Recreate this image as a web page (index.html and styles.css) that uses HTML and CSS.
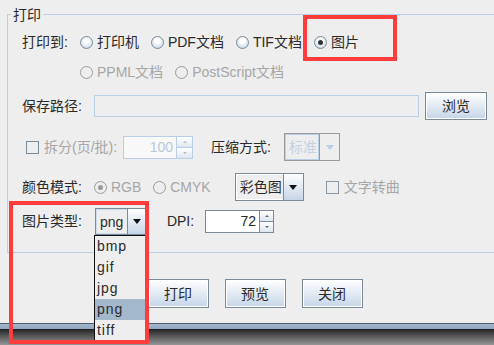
FILE: index.html
```
<!DOCTYPE html>
<html lang="zh-CN">
<head>
    <meta charset="UTF-8">
    <title>打印</title>
    <link rel="stylesheet" href="styles.css">
</head>
<body>
    <div class="group">
        <span class="group-title">打印</span>

        <div class="row row-target">
            <span class="label">打印到:</span>
            <span class="opt"><span class="radio"></span>打印机</span>
            <span class="opt"><span class="radio"></span>PDF文档</span>
            <span class="opt"><span class="radio"></span>TIF文档</span>
            <span class="opt"><span class="radio on"></span>图片</span>
        </div>

        <div class="row row-more">
            <span class="opt off"><span class="radio"></span>PPML文档</span>
            <span class="opt off"><span class="radio"></span>PostScript文档</span>
        </div>

        <div class="row">
            <span class="label">保存路径:</span>
            <span class="path-field"></span>
            <button class="button browse">浏览</button>
        </div>

        <div class="row row-split">
            <span class="opt off split-check"><span class="check"></span>拆分(页/批):</span>
            <span class="spinner split off">
                <span class="spin-field">100</span>
                <span class="spin-btns"><span class="up"></span><span class="down"></span></span>
            </span>
            <span class="label compress">压缩方式:</span>
            <span class="combo std off">
                <span class="combo-field">标准</span>
                <span class="combo-arrow"><span class="tri"></span></span>
            </span>
        </div>

        <div class="row row-color">
            <span class="label">颜色模式:</span>
            <span class="opt off"><span class="radio on"></span>RGB</span>
            <span class="opt off"><span class="radio"></span>CMYK</span>
            <span class="combo color">
                <span class="combo-field">彩色图</span>
                <span class="combo-arrow"><span class="tri"></span></span>
            </span>
            <span class="opt off curve"><span class="check"></span>文字转曲</span>
        </div>

        <div class="row">
            <span class="label">图片类型:</span>
            <span class="combo type">
                <span class="combo-field">png</span>
                <span class="combo-arrow"><span class="tri"></span></span>
                <ul class="popup">
                    <li>bmp</li>
                    <li>gif</li>
                    <li>jpg</li>
                    <li class="sel">png</li>
                    <li>tiff</li>
                </ul>
            </span>
            <span class="label dpi">DPI:</span>
            <span class="spinner dpi-spin">
                <span class="spin-field">72</span>
                <span class="spin-btns"><span class="up"></span><span class="down"></span></span>
            </span>
        </div>
    </div>

    <div class="actions">
        <button class="button">打印</button>
        <button class="button">预览</button>
        <button class="button">关闭</button>
    </div>

    <div class="frame-edge"></div>

    <div class="mark mark-image"></div>
    <div class="mark mark-type"></div>
</body>
</html>
```

FILE: styles.css
```
body {
    margin: 0;
    width: 494px;
    height: 345px;
    overflow: hidden;
    position: relative;
    background: #eeeeee;
    font-family: "Liberation Sans", "Noto Sans CJK SC", sans-serif;
    font-size: 14px;
    line-height: 16px;
    color: #2a2a2a;
}
.group {
    position: relative;
    margin: 14px 0 0 7px;
    width: 500px;
    height: 237px;
    border: 1px solid #b8cfe5;
    border-right: none;
}
.group-title {
    position: absolute;
    top: -8px;
    left: 3px;
    padding: 0 2px;
    background: #eeeeee;
}
.row {
    display: flex;
    align-items: center;
    height: 28px;
    padding-left: 14px;
    margin-top: 6px;
}
.row-target { margin-top: 13px; }
.row-more { margin-top: 2px; padding-left: 72px; }
.row-split { margin-top: 13px; padding-left: 18px; }
.row-color { margin-top: 12px; }
.label { margin-right: 12px; white-space: nowrap; }
.opt {
    display: flex;
    align-items: center;
    margin-right: 12px;
    white-space: nowrap;
}
.opt.off { color: #a6a6a6; }
.split-check { margin-right: 0; }
.radio {
    position: relative;
    width: 11px;
    height: 11px;
    margin-right: 4px;
    border: 1px solid #7a8a99;
    border-radius: 50%;
    background: radial-gradient(circle at 50% 35%, #ffffff 25%, #b9cbe0 100%);
}
.radio.on::after {
    content: "";
    position: absolute;
    left: 3px;
    top: 3px;
    width: 5px;
    height: 5px;
    border-radius: 50%;
    background: #333;
}
.off .radio {
    border-color: #9a9a9a;
    background: #eeeeee;
}
.off .radio.on::after { background: #9a9a9a; }
.check {
    width: 11px;
    height: 11px;
    margin-right: 5px;
    border: 1px solid #7a8a99;
}
.path-field {
    width: 323px;
    height: 20px;
    border: 1px solid #b8cfe5;
    background: #eeeeee;
    margin-right: 6px;
}
.button {
    width: 61px;
    height: 29px;
    padding: 0;
    border: 1px solid #7a8a99;
    box-shadow: inset 0 0 0 1px #ffffff;
    background: linear-gradient(#ffffff, #c5d5e8);
    font: inherit;
    color: #2a2a2a;
}
.browse { width: 62px; height: 28px; }
.spinner {
    display: flex;
    height: 23px;
    box-sizing: border-box;
}
.spin-field {
    box-sizing: border-box;
    height: 23px;
    padding-right: 3px;
    text-align: right;
    line-height: 21px;
    border: 1px solid #7a8a99;
    background: #ffffff;
}
.spin-btns {
    display: flex;
    flex-direction: column;
    box-sizing: border-box;
    height: 23px;
    border: 1px solid #7a8a99;
    border-left: none;
}
.spin-btns span {
    flex: 1;
    display: flex;
    align-items: center;
    justify-content: center;
    background: linear-gradient(#ffffff, #dde6f0);
}
.spin-btns .down { border-top: 1px solid #7a8a99; }
.spin-btns span::after {
    content: "";
    border-left: 2px solid transparent;
    border-right: 2px solid transparent;
}
.spin-btns .up::after { border-bottom: 2px solid #666; }
.spin-btns .down::after { border-top: 2px solid #666; }
.split { margin-left: 6px; }
.split .spin-field {
    width: 54px;
    color: #b8c8d8;
    border-color: #b8cfe5;
    background: #f8f8f8;
}
.split .spin-btns { width: 16px; border-color: #b8cfe5; }
.split .spin-btns .down { border-top-color: #b8cfe5; }
.split .spin-btns span::after { opacity: 0.4; }
.compress { margin-left: 18px; margin-right: 13px; }
.combo {
    position: relative;
    display: flex;
    height: 28px;
    box-sizing: border-box;
    border: 1px solid #7a8a99;
}
.combo-field {
    flex: 1;
    padding-left: 3px;
    line-height: 24px;
    border: 1px solid #ffffff;
    border-right: none;
    background: #eeeeee;
    white-space: nowrap;
}
.combo-arrow {
    display: flex;
    align-items: center;
    justify-content: center;
    width: 19px;
    border-left: 1px solid #7a8a99;
    background: linear-gradient(#ffffff, #c5d5e8);
}
.tri {
    border-left: 4px solid transparent;
    border-right: 4px solid transparent;
    border-top: 5px solid #111;
}
.std { width: 56px; border-color: #9a9a9a; }
.std .combo-field { color: #c4d1de; border: 1px solid #b8cfe5; }
.std .combo-arrow { background: #eeeeee; border-left-color: #9a9a9a; }
.std .tri { border-top-color: #b8cfe5; }
.color { width: 69px; margin-left: 12px; margin-right: 22px; }
.curve .check { border-color: #8898a8; }
.type { width: 53px; height: 27px; margin-left: 1px; }
.type .combo-field { border-color: #cfdbe8; }
.dpi { margin-left: 19px; margin-right: 11px; }
.dpi-spin .spin-field { width: 55px; }
.dpi-spin .spin-btns { width: 14px; }
.popup {
    position: absolute;
    top: 26px;
    left: -2px;
    z-index: 2;
    width: 51px;
    margin: 0;
    padding: 0;
    list-style: none;
    border: 1px solid #111;
    border-bottom: none;
    background: #eeeeee;
}
.popup li {
    height: 21px;
    padding-left: 2px;
    line-height: 21px;
    letter-spacing: 1px;
}
.popup .sel { background: #a3b8cc; }
.actions {
    display: flex;
    justify-content: center;
    gap: 16px;
    width: 510px;
    margin-top: 26px;
}
.frame-edge {
    margin-top: 15px;
    height: 22px;
    border-top: 1px solid #4e5d6c;
    background: linear-gradient(#a3b8cc 0, #8ea5c0 5px, #1e1e1e 5px, #3a3a3a 8px, #9c9c9c 22px);
}
.mark {
    position: absolute;
    z-index: 3;
    box-sizing: border-box;
    border: 4px solid #ff3c3c;
}
.mark-image { left: 303px; top: 15px; width: 94px; height: 46px; }
.mark-type { left: 9px; top: 201px; width: 140px; height: 143px; }
```
